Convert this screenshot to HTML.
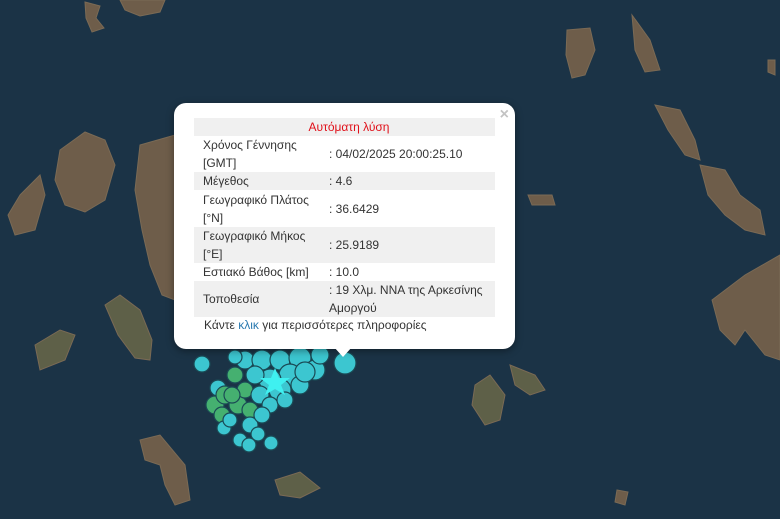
<!DOCTYPE html>
<html><head><meta charset="utf-8"><style>
html,body{margin:0;padding:0;width:780px;height:519px;overflow:hidden;background:#1b3346;font-family:"Liberation Sans","Noto Sans CJK SC",sans-serif}
svg{position:absolute;left:0;top:0}
.pop{position:absolute;left:174px;top:103px;width:341px;height:246px;background:#fff;border-radius:12px;box-shadow:0 2px 8px rgba(0,0,0,.4)}
.tip{position:absolute;left:334px;top:347px;width:0;height:0;border-left:9px solid transparent;border-right:9px solid transparent;border-top:10px solid #fff}
.x{position:absolute;right:6px;top:3px;color:#c3c3c3;font-size:16px;font-weight:bold}
table{position:absolute;left:20px;top:15px;width:301px;border-collapse:collapse;font-size:12px;color:#333}
td{padding:0 0 0 9px;line-height:18px;vertical-align:middle}
tr.g td{background:#f0f0f0}
td.v{padding-left:0}
.h{color:#e0101a;text-align:center;height:18px}
.f{position:absolute;left:30px;top:215px;font-size:12px;color:#333}
.f span{color:#2a7ab0}
</style></head><body>
<svg width="780" height="519">
<g fill="#6e5d4a" stroke="#7a6a55" stroke-width="1">
<path d="M85 2 L100 6 L96 18 L104 28 L92 32 L86 18 Z"/>
<path d="M120 0 L165 0 L160 12 L140 16 L125 10 Z"/>
<path d="M60 150 L85 132 L105 140 L115 165 L105 200 L85 212 L65 205 L55 180 Z"/>
<path d="M20 195 L40 175 L45 195 L35 230 L15 235 L8 215 Z"/>
<path d="M140 145 L175 135 L175 300 L162 295 L150 265 L142 230 L135 190 Z"/>
<path d="M105 305 L120 295 L140 310 L152 340 L150 360 L135 358 L118 335 Z" fill="#5e6048"/>
<path d="M35 345 L60 330 L75 335 L65 360 L40 370 Z" fill="#5e6048"/>
<path d="M567 30 L590 28 L595 50 L585 75 L572 78 L566 55 Z"/>
<path d="M632 15 L650 40 L660 70 L645 72 L635 50 Z"/>
<path d="M655 105 L680 110 L695 140 L700 160 L685 155 L668 130 Z"/>
<path d="M700 165 L725 170 L740 195 L760 210 L765 235 L745 230 L725 215 L708 195 Z"/>
<path d="M528 195 L552 195 L555 205 L532 205 Z"/>
<path d="M712 300 L745 275 L780 255 L780 360 L765 355 L745 330 L735 345 L720 330 Z"/>
<path d="M475 385 L490 375 L505 395 L500 420 L485 425 L472 405 Z" fill="#5e6048"/>
<path d="M510 365 L535 375 L545 390 L530 395 L515 385 Z" fill="#5e6048"/>
<path d="M140 440 L160 435 L185 465 L190 500 L175 505 L165 485 L160 465 L145 460 Z"/>
<path d="M275 480 L300 472 L320 488 L300 498 L280 495 Z" fill="#5e6048"/>
<path d="M617 490 L628 492 L625 505 L615 502 Z"/>
<path d="M768 60 L775 60 L775 75 L768 72 Z"/>
</g>
<g stroke="#1a4a55" stroke-width="1.2">
<circle cx="202" cy="364" r="8" fill="#3cc6d0"/>
<circle cx="345" cy="363" r="11" fill="#3cc6d0"/>
<circle cx="218" cy="388" r="8" fill="#3cc6d0"/>
<g fill="#45b070">
<circle cx="215" cy="405" r="9"/><circle cx="225" cy="395" r="9"/><circle cx="238" cy="405" r="9"/><circle cx="222" cy="415" r="8"/><circle cx="245" cy="390" r="8"/><circle cx="235" cy="375" r="8"/><circle cx="250" cy="410" r="8"/><circle cx="232" cy="395" r="8"/>
</g>
<g fill="#3cc6d0">
<circle cx="245" cy="360" r="9"/><circle cx="262" cy="360" r="10"/><circle cx="280" cy="360" r="10"/><circle cx="300" cy="358" r="11"/><circle cx="315" cy="370" r="10"/><circle cx="290" cy="375" r="11"/><circle cx="270" cy="380" r="11"/><circle cx="255" cy="375" r="9"/><circle cx="260" cy="395" r="9"/><circle cx="280" cy="390" r="11"/><circle cx="300" cy="385" r="9"/><circle cx="270" cy="405" r="8"/><circle cx="250" cy="425" r="8"/><circle cx="240" cy="440" r="7"/><circle cx="258" cy="434" r="7"/><circle cx="224" cy="428" r="7"/><circle cx="230" cy="420" r="7"/><circle cx="249" cy="445" r="7"/><circle cx="271" cy="443" r="7"/><circle cx="320" cy="355" r="9"/><circle cx="235" cy="357" r="7"/><circle cx="305" cy="372" r="10"/><circle cx="285" cy="400" r="8"/><circle cx="262" cy="415" r="8"/>
</g>
<polygon points="275,368 279,378 290,378 281,385 285,395 275,389 265,395 269,385 260,378 271,378" fill="#3ff0f0" stroke="none"/>
</g>
</svg>
<div class="pop">
<div class="x">×</div>
<table>
<tr class="g"><td colspan="2" class="h">Αυτόματη λύση</td></tr>
<tr><td style="height:36px;width:126px">Χρόνος Γέννησης<br>[GMT]</td><td class="v">: 04/02/2025 20:00:25.10</td></tr>
<tr class="g"><td style="height:18px">Μέγεθος</td><td class="v">: 4.6</td></tr>
<tr><td style="height:37px">Γεωγραφικό Πλάτος<br>[°N]</td><td class="v">: 36.6429</td></tr>
<tr class="g"><td style="height:36px">Γεωγραφικό Μήκος<br>[°E]</td><td class="v">: 25.9189</td></tr>
<tr><td style="height:18px">Εστιακό Βάθος [km]</td><td class="v">: 10.0</td></tr>
<tr class="g"><td style="height:35px">Τοποθεσία</td><td class="v">: 19 Χλμ. ΝΝΑ της Αρκεσίνης<br>Αμοργού</td></tr>
</table>
<div class="f">Κάντε <span>κλικ</span> για περισσότερες πληροφορίες</div>
</div>
<div class="tip"></div>
</body></html>
